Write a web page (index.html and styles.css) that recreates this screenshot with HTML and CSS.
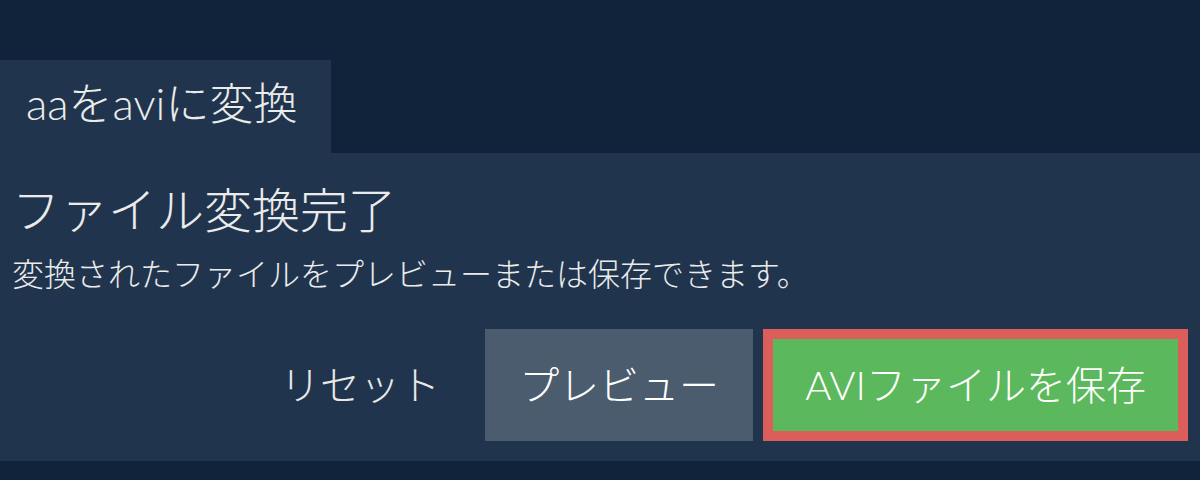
FILE: index.html
```html
<!DOCTYPE html>
<html lang="ja">
<head>
<meta charset="utf-8">
<title>aaをaviに変換</title>
<link rel="stylesheet" href="styles.css">
</head>
<body>
<div class="page">
  <div class="tab">aaをaviに変換</div>
  <section class="panel">
    <h1 class="title">ファイル変換完了</h1>
    <p class="desc">変換されたファイルをプレビューまたは保存できます。</p>
    <div class="actions">
      <button class="btn btn-reset">リセット</button>
      <button class="btn btn-preview">プレビュー</button>
      <button class="btn btn-save">AVIファイルを保存</button>
    </div>
  </section>
</div>
</body>
</html>
```
FILE: styles.css
```css
html, body {
  margin: 0;
  padding: 0;
}
body {
  background: #10233a;
  color: #ebebeb;
  font-family: Lato, "Noto Sans CJK JP", sans-serif;
  font-weight: 300;
  width: 1200px;
  height: 480px;
  overflow: hidden;
}
.page {
  padding-top: 60px;
}
.tab {
  display: inline-block;
  background: #20354d;
  height: 93px;
  box-sizing: border-box;
  padding: 0 34px 0 26px;
  font-size: 44px;
  line-height: 86px;
}
.panel {
  background: #20354d;
  padding: 28px 12px 20px 12px;
}
.title {
  margin: 0;
  font-size: 48px;
  font-weight: 300;
  line-height: 1.2;
}
.desc {
  margin: 11px 0 0 0;
  font-size: 32px;
  line-height: 48px;
}
.actions {
  display: flex;
  justify-content: flex-end;
  gap: 10px;
  margin-top: 31px;
}
.btn {
  font-family: Lato, "Noto Sans CJK JP", sans-serif;
  font-weight: 300;
  font-size: 40px;
  line-height: 60px;
  padding: 26px 35px;
  border: 0;
  color: #ffffff;
  background: transparent;
  cursor: pointer;
}
.btn-reset {
  color: #e8e8e8;
}
.btn-preview {
  background: #4b5c6e;
  padding: 26px 34px;
}
.btn-save {
  background: #5cb85c;
  border: 10px solid #db5e5a;
  padding: 16px 32px;
}
```
